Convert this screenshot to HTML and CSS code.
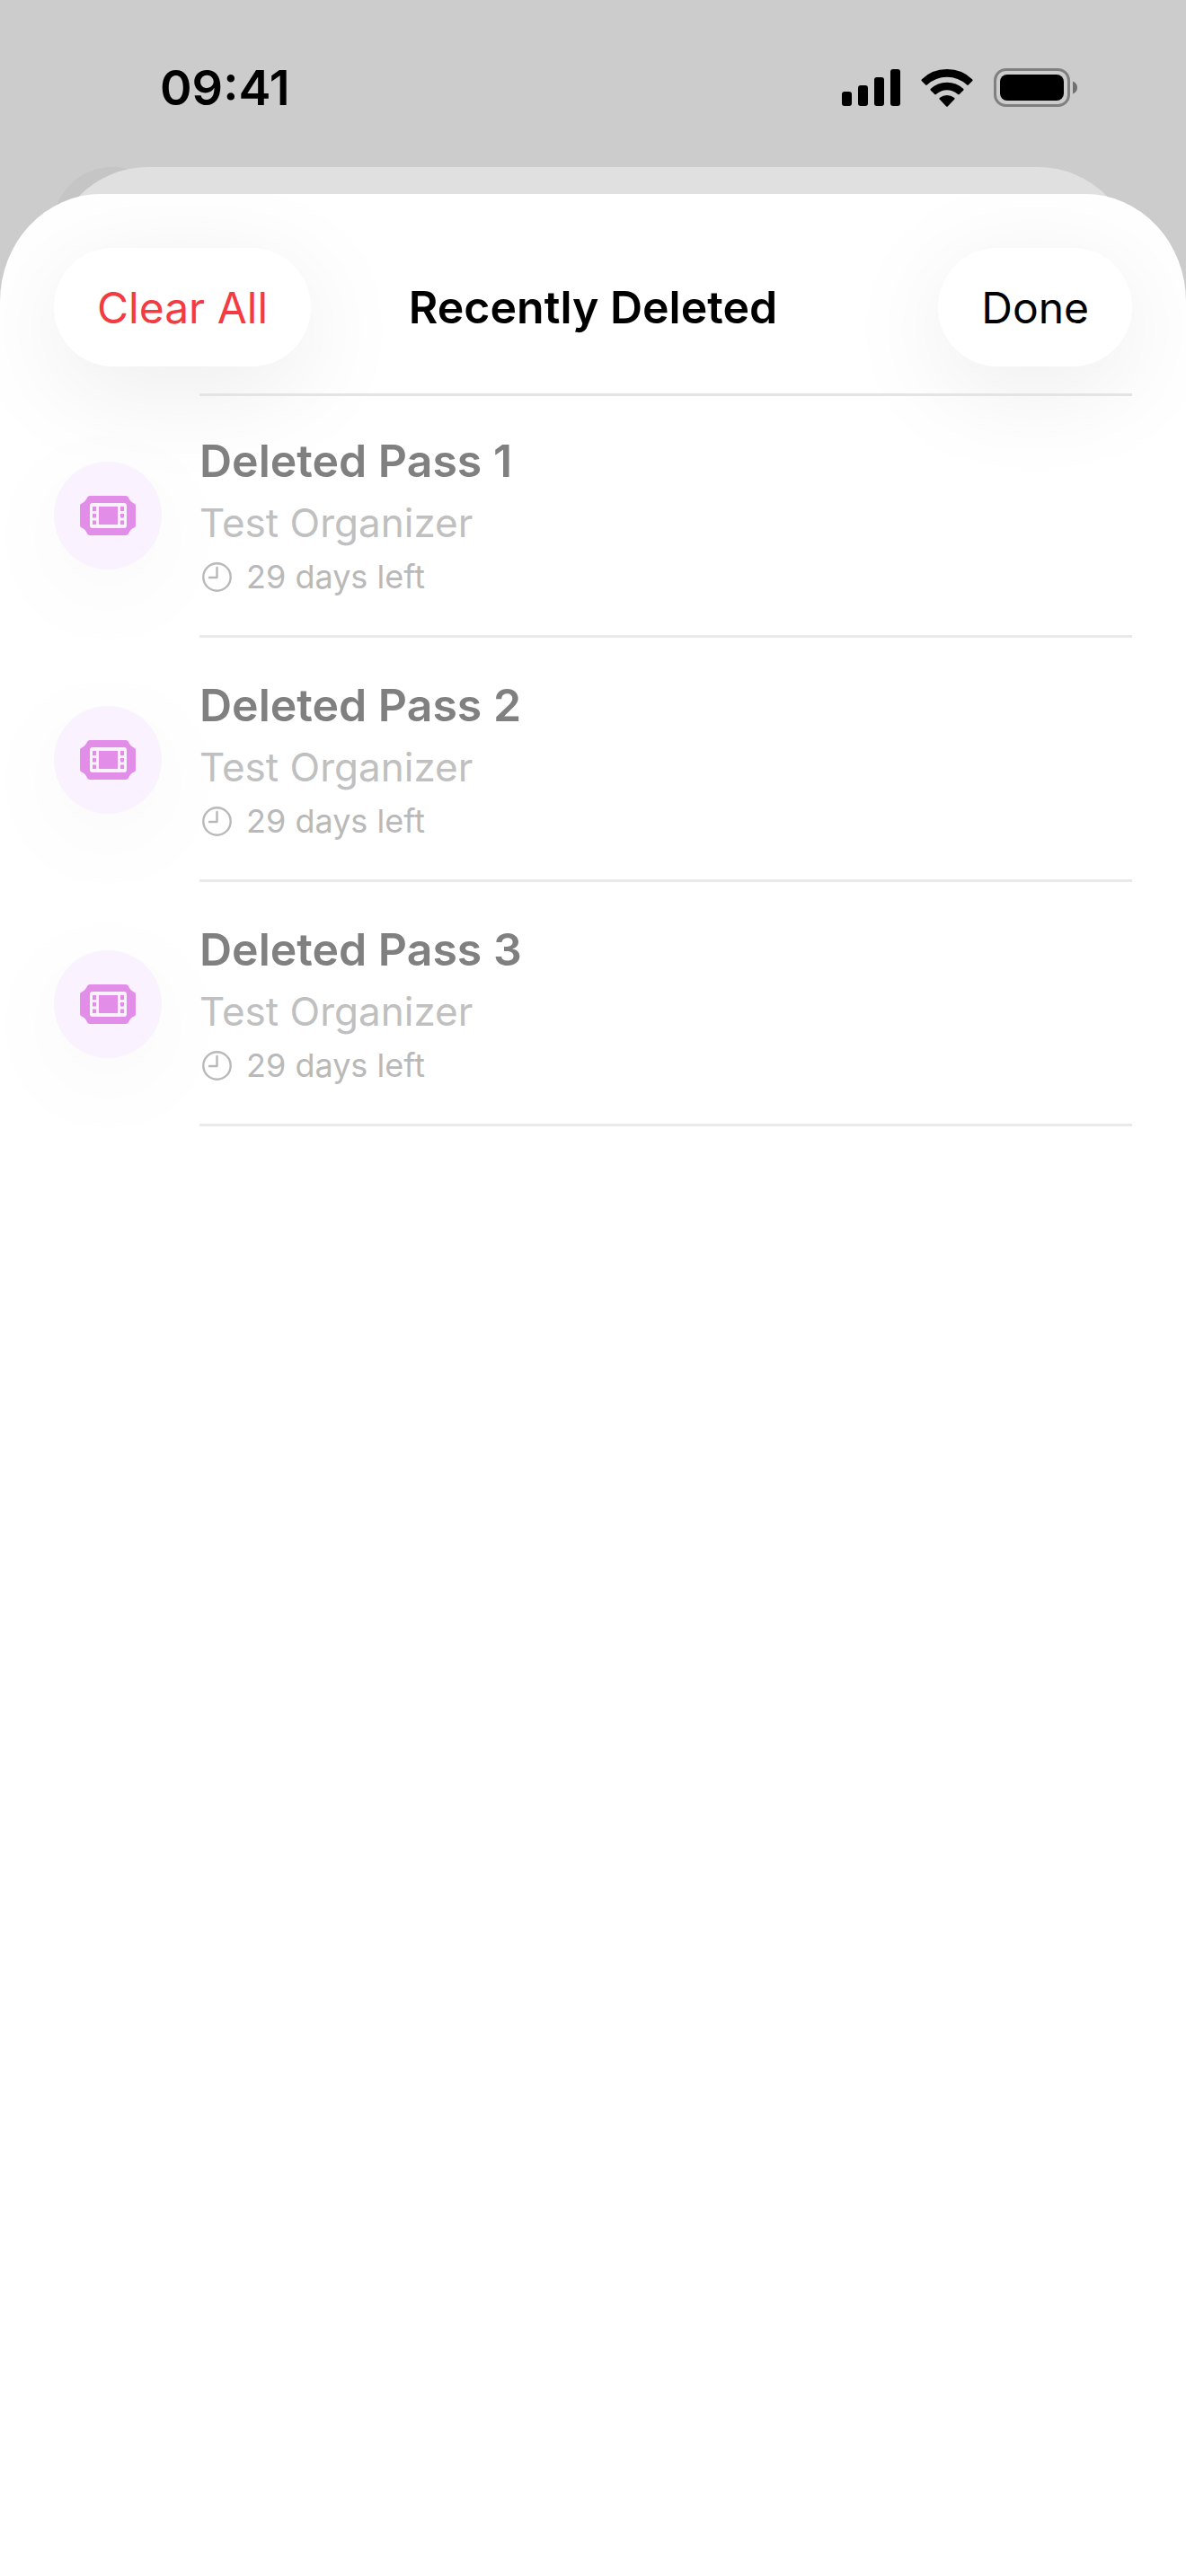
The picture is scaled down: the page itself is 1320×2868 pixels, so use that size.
FILE: index.html
```html
<!DOCTYPE html>
<html lang="en">
  <head>
    <meta charset="UTF-8" />
    <meta name="viewport" content="width=device-width, initial-scale=1.0" />
    <title>Recently Deleted</title>
    <link rel="stylesheet" href="styles.css">
  </head>
  <body>
    <!-- shared icons -->
    <svg class="sprite" aria-hidden="true">
      <symbol id="icon-ticket" viewBox="0 0 62 44">
        <path fill="currentColor" d="M11 0H51Q53 0 54 2Q56 7 61 9Q62 9.500 62 11V33Q62 34.500 61 35Q56 37 54 42Q53 44 51 44H11Q9 44 8 42Q6 37 1 35Q0 34.500 0 33V11Q0 9.500 1 9Q6 7 8 2Q9 0 11 0Z" />
        <rect class="film" x="11" y="8" width="41" height="28" rx="3" />
        <rect fill="currentColor" x="21" y="12" width="21" height="20" />
        <path fill="currentColor" d="M14 12h4v5h-4zM14 20h4v4.500h-4zM14 27.500h4v4.500h-4zM45 12h4v5h-4zM45 20h4v4.500h-4zM45 27.500h4v4.500h-4z" />
      </symbol>
      <symbol id="icon-clock" viewBox="0 0 33 33">
        <g fill="none" stroke="currentColor" stroke-width="2.400" stroke-linecap="round" stroke-linejoin="round">
          <circle cx="16.500" cy="16.500" r="15.200" />
          <path d="M16.500 6V17H8" />
        </g>
      </symbol>
    </svg>

    <div class="screen">
      <div class="status-bar">
        <div class="time">09:41</div>
        <div class="status-icons">
          <svg width="65" height="42" viewBox="0 0 65 42">
            <rect x="0" y="25" width="11" height="16" rx="3" />
            <rect x="18" y="18" width="11" height="23" rx="3" />
            <rect x="36" y="9" width="11" height="32" rx="3" />
            <rect x="54" y="0" width="11" height="41" rx="3" />
          </svg>
          <svg width="58" height="42" viewBox="0 0 58 42">
            <path d="M29 0Q46 0 57.300 11.500Q58 12.300 57.300 13L52.800 17.600Q52 18.200 51.200 17.500Q41.500 8.800 29 8.800Q16.500 8.800 6.800 17.500Q6 18.200 5.200 17.600L0.700 13Q0 12.300 0.700 11.500Q12 0 29 0Z" />
            <path d="M29 14.800Q39.500 14.800 47.300 22Q48 22.700 47.300 23.400L42.700 28Q42 28.600 41.200 28Q35.700 23.300 29 23.300Q22.300 23.300 16.800 28Q16 28.600 15.300 28L10.700 23.400Q10 22.700 10.700 22Q18.500 14.800 29 14.800Z" />
            <path d="M29 29Q33.500 29 37.300 32Q38 32.700 37.300 33.500L29.800 41.400Q29 42 28.200 41.400L20.700 33.500Q20 32.700 20.700 32Q24.500 29 29 29Z" />
          </svg>
          <svg width="94" height="44" viewBox="0 0 94 44">
            <rect class="battery-case" x="1.500" y="1.500" width="82" height="40" rx="12" />
            <rect x="7" y="7" width="71" height="29" rx="8" />
            <path class="battery-tip" d="M88 14.500Q93 16.500 93 21.500Q93 26.500 88 28.500Z" />
          </svg>
        </div>
      </div>

      <div class="sheets">
        <div class="back-button"></div>
        <div class="back-sheet"></div>
        <main class="sheet">
          <header class="toolbar">
            <button class="pill pill-danger" type="button">Clear All</button>
            <h1 class="title">Recently Deleted</h1>
            <button class="pill pill-done" type="button">Done</button>
          </header>

          <ul class="pass-list">
            <li class="pass">
              <div class="pass-icon"><svg width="62" height="44"><use href="#icon-ticket" /></svg></div>
              <div class="pass-body">
                <h2 class="pass-name">Deleted Pass 1</h2>
                <p class="pass-organizer">Test Organizer</p>
                <p class="pass-expiry"><svg width="33" height="33"><use href="#icon-clock" /></svg>29 days left</p>
              </div>
            </li>
            <li class="pass">
              <div class="pass-icon"><svg width="62" height="44"><use href="#icon-ticket" /></svg></div>
              <div class="pass-body">
                <h2 class="pass-name">Deleted Pass 2</h2>
                <p class="pass-organizer">Test Organizer</p>
                <p class="pass-expiry"><svg width="33" height="33"><use href="#icon-clock" /></svg>29 days left</p>
              </div>
            </li>
            <li class="pass">
              <div class="pass-icon"><svg width="62" height="44"><use href="#icon-ticket" /></svg></div>
              <div class="pass-body">
                <h2 class="pass-name">Deleted Pass 3</h2>
                <p class="pass-organizer">Test Organizer</p>
                <p class="pass-expiry"><svg width="33" height="33"><use href="#icon-clock" /></svg>29 days left</p>
              </div>
            </li>
          </ul>
        </main>
      </div>
    </div>
  </body>
</html>
```
FILE: styles.css
```css
* {
  box-sizing: border-box;
}
body {
  margin: 0;
  background-color: #ccc;
  color: #000;
  font-family: Inter, "Liberation Sans", sans-serif;
}
h1,
h2,
p,
ul {
  margin: 0;
  padding: 0;
}
svg {
  display: block;
  flex-shrink: 0;
}
.sprite {
  display: none;
}
.screen {
  display: flex;
  flex-direction: column;
  min-height: 100vh;
}

/* status bar */
.status-bar {
  display: flex;
  align-items: center;
  justify-content: space-between;
  padding: 68px 120px 58px 178px;
}
.time {
  font-size: 54px;
  line-height: 60px;
  font-weight: 600;
}
.status-icons {
  display: flex;
  align-items: center;
  gap: 23px;
}
.battery-case {
  fill: none;
  stroke: #808080;
  stroke-width: 3;
}
.battery-tip {
  fill: #707070;
}

/* stacked sheets share one grid cell */
.sheets {
  display: grid;
  flex: 1;
}
.sheets > * {
  grid-area: 1 / 1;
}
.back-button {
  width: 132px;
  height: 132px;
  margin-left: 59px;
  border-radius: 50%;
  background-color: #c5c5c5;
}
.back-sheet {
  margin: 0 57px;
  border-radius: 108px 108px 0 0;
  background-color: #e0e0e0;
}
.sheet {
  margin-top: 30px;
  border-radius: 112px 112px 0 0 / 120px 120px 0 0;
  background-color: #fff;
  overflow: hidden;
}

.toolbar {
  display: grid;
  grid-template-columns: 1fr auto 1fr;
  align-items: center;
  padding: 60px 60px 30px;
}
.title {
  font-size: 50px;
  line-height: 60px;
  font-weight: 600;
}
.pill {
  justify-self: start;
  height: 132px;
  padding: 0 48px;
  border: 0;
  border-radius: 66px;
  background-color: #fff;
  box-shadow: 0 24px 120px rgba(0, 0, 0, 0.08);
  color: #000;
  font-family: inherit;
  font-size: 48px;
}
.pill-danger {
  color: #f43b42;
}
.pill-done {
  justify-self: end;
}

/* pass list */
.pass-list {
  padding: 0 60px;
  list-style: none;
}
.pass {
  display: flex;
  align-items: center;
  gap: 42px;
}
.pass-icon {
  display: flex;
  align-items: center;
  justify-content: center;
  flex-shrink: 0;
  width: 120px;
  height: 120px;
  border-radius: 50%;
  background-color: #faf2fe;
  box-shadow: 0 24px 120px rgba(0, 0, 0, 0.04);
  color: #e28ee9;
}
.film {
  fill: #faf2fe;
}
.pass-body {
  flex: 1;
  display: flex;
  flex-direction: column;
  gap: 6px;
  padding: 42px 0 41px;
  border-bottom: 3px solid #e9e9e9;
}
.pass:first-child .pass-body {
  box-shadow: inset 0 3px #e4e4e4;
}
.pass-name {
  color: #808080;
  font-size: 50px;
  line-height: 66px;
  font-weight: 600;
}
.pass-organizer {
  color: #c0c0c0;
  font-size: 44px;
  line-height: 60px;
}
.pass-expiry {
  display: flex;
  align-items: center;
  gap: 16px;
  padding-left: 3px;
  color: #b9b9b9;
  font-size: 36px;
  line-height: 48px;
}
```
